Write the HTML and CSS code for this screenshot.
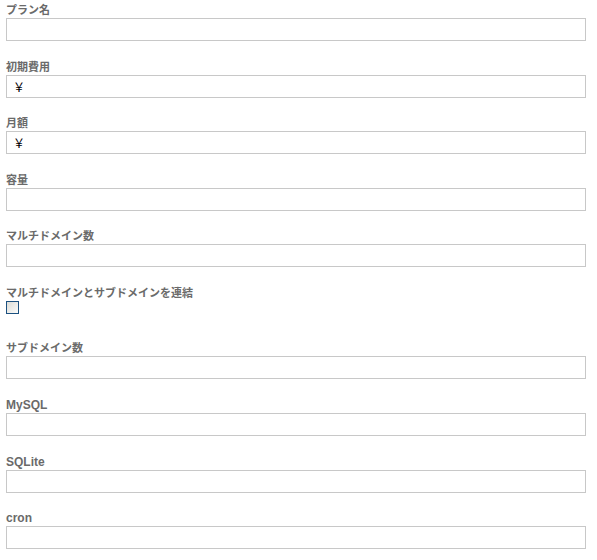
FILE: index.html
```html
<!DOCTYPE html>
<html lang="ja">
<head>
  <meta charset="UTF-8">
  <title>プラン登録</title>
  <link rel="stylesheet" href="styles.css">
</head>
<body>

<form class="plan-form">
  <div class="field">
    <label for="planName">プラン名</label>
    <input id="planName" type="text">
  </div>

  <div class="field">
    <label for="initialFee">初期費用</label>
    <input id="initialFee" type="text" value="￥">
  </div>

  <div class="field">
    <label for="monthly">月額</label>
    <input id="monthly" type="text" value="￥">
  </div>

  <div class="field">
    <label for="capacity">容量</label>
    <input id="capacity" type="text">
  </div>

  <div class="field">
    <label for="multiDomain">マルチドメイン数</label>
    <input id="multiDomain" type="text">
  </div>

  <!-- checkbox row is shorter than the text rows -->
  <div class="field field-check">
    <label for="linkDomains">マルチドメインとサブドメインを連結</label>
    <input id="linkDomains" type="checkbox">
  </div>

  <div class="field">
    <label for="subDomain">サブドメイン数</label>
    <input id="subDomain" type="text">
  </div>

  <div class="field">
    <label class="latin" for="mysql">MySQL</label>
    <input id="mysql" type="text">
  </div>

  <div class="field">
    <label class="latin" for="sqlite">SQLite</label>
    <input id="sqlite" type="text">
  </div>

  <div class="field">
    <label class="latin" for="cron">cron</label>
    <input id="cron" type="text">
  </div>
</form>

</body>
</html>
```

FILE: styles.css
```css
body {
  margin: 0;
  font-family: "Liberation Sans", "Noto Sans CJK JP", sans-serif;
  background: #fff;
}
.plan-form {
  padding: 2px 0 0 6px;
}
.field {
  height: 56.6px;
}
.field label {
  display: block;
  height: 15px;
  line-height: 16px;
  font-size: 11px;
  font-weight: bold;
  color: #6a6a6a;
}
.field label.latin {
  font-size: 12px;
}
.field input[type="text"] {
  display: block;
  box-sizing: border-box;
  width: 580px;
  height: 23px;
  margin: 1px 0 0 0;
  padding: 0 6px;
  border: 1px solid #c8c8c8;
  font-family: "Liberation Sans", "Noto Sans CJK JP", sans-serif;
  font-size: 12px;
  color: #000;
  outline: none;
}
.field-check {
  height: 55.4px;
}
.field-check input[type="checkbox"] {
  display: block;
  appearance: none;
  -webkit-appearance: none;
  box-sizing: border-box;
  width: 13px;
  height: 13px;
  margin: 1.4px 0 0 0;
  border: 1px solid #1c5180;
  background: linear-gradient(135deg, #dcdcd7, #fbfbfa);
}
```
